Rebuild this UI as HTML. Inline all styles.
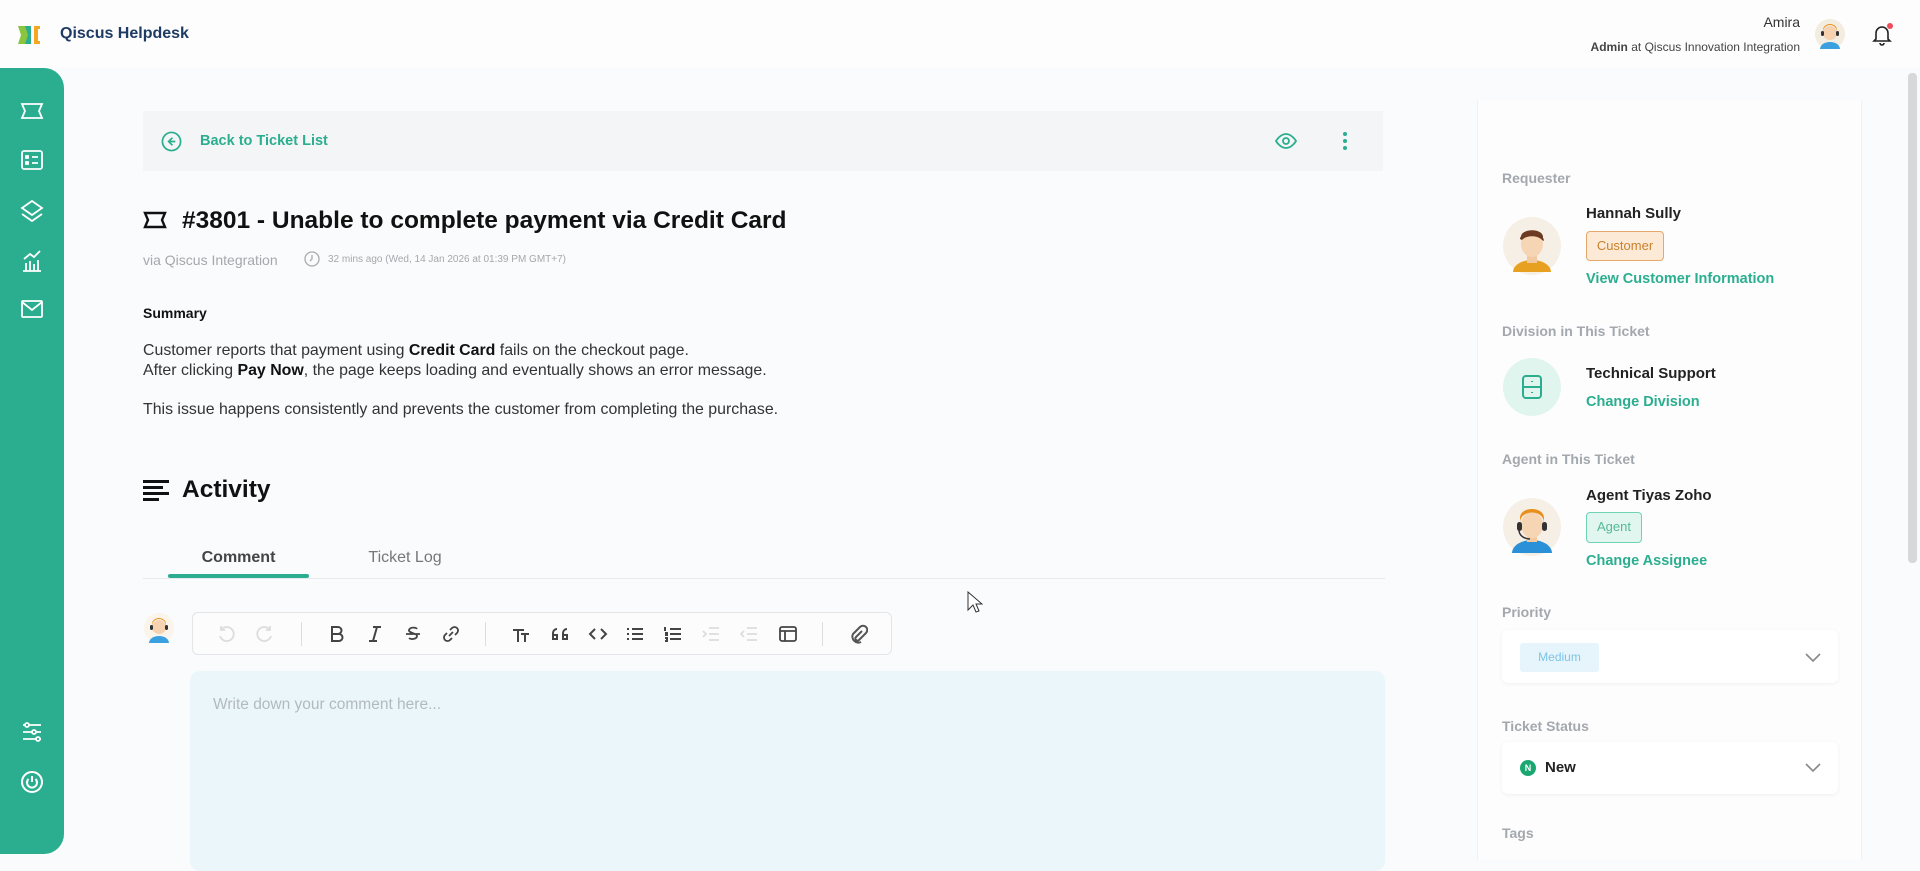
<!DOCTYPE html>
<html><head><meta charset="utf-8"><style>
*{margin:0;padding:0;box-sizing:border-box}
body{width:1920px;height:854px;overflow:hidden;background:#fafbfc;font-family:"Liberation Sans",sans-serif;color:#1f2328;position:relative}
.a{position:absolute}
.hdr{left:0;top:0;width:1920px;height:68px;background:#fdfdfd}
.side{left:0;top:68px;width:64px;height:786px;background:#2bae8f;border-radius:0 20px 20px 0}
.side svg{position:absolute;left:20px}
.lbl{font-size:14px;color:#a3a8ae;font-weight:bold;left:1502px}
.teal{color:#2bae8f}
.tb svg{position:absolute;top:11px}
</style></head><body>
<div class="a hdr"></div>
<svg class="a" style="left:18px;top:26px" width="28" height="18" viewBox="0 0 28 18"><path d="M0 0h8l3 9-3 9H0l3-9z" fill="#8bc53f"/><path d="M7 0h6v18H7l3-9z" fill="#2bae8f"/><path d="M16 0h6v3h-2v12h2v3h-6z" fill="#f5a623"/></svg>
<div class="a" style="left:60px;top:25px;font-size:16px;font-weight:bold;color:#1d3b63">Qiscus Helpdesk</div>
<div class="a" style="right:120px;top:14px;font-size:14px;color:#333">Amira</div>
<div class="a" style="right:120px;top:40px;font-size:12px;color:#444"><b>Admin</b> at Qiscus Innovation Integration</div>
<svg class="a" style="left:1815px;top:19px" width="30" height="32" viewBox="0 0 30 32"><circle cx="15" cy="15" r="15" fill="#f3ece0"/><path d="M5 30a10 7 0 0 1 20 0z" fill="#3aa0e0"/><circle cx="15" cy="14" r="7" fill="#f6d2b0"/><path d="M8 13a7 7 0 0 1 14 0v-2a7 6 0 0 0-14 0z" fill="#e8901e"/><rect x="6" y="12" width="3" height="5" rx="1.5" fill="#333"/><rect x="21" y="12" width="3" height="5" rx="1.5" fill="#333"/></svg>
<svg class="a" style="left:1870px;top:22px" width="24" height="24" viewBox="0 0 24 24" fill="none" stroke="#222" stroke-width="1.6"><path d="M6 17V11a6 6 0 0 1 12 0v6l2 2H4z"/><path d="M10 21a2 2 0 0 0 4 0"/><circle cx="20" cy="4" r="3" fill="#ef4b5b" stroke="none"/></svg>

<div class="a side">
<svg style="top:33px" width="24" height="20" viewBox="0 0 24 20" fill="none" stroke="#fff" stroke-width="1.8"><path d="M2 3h20l-3 7 3 7H2l3-7z"/></svg>
<svg style="top:81px" width="24" height="22" viewBox="0 0 24 22" fill="none" stroke="#fff" stroke-width="1.8"><rect x="2" y="2" width="20" height="18" rx="2"/><path d="M12 8h6M12 14h6"/><rect x="6" y="7" width="2" height="2" fill="#fff"/><rect x="6" y="13" width="2" height="2" fill="#fff"/></svg>
<svg style="top:131px" width="24" height="24" viewBox="0 0 24 24" fill="none" stroke="#fff" stroke-width="1.8"><path d="M12 2l10 7-10 7-10-7z"/><path d="M2 15l10 7 10-7"/></svg>
<svg style="top:181px" width="24" height="24" viewBox="0 0 24 24" fill="none" stroke="#fff" stroke-width="1.8"><path d="M3 22h18M6 22v-8M10 22v-10M14 22v-7M18 22v-11M4 10l6-5 4 3 6-6"/></svg>
<svg style="top:231px" width="24" height="20" viewBox="0 0 24 20" fill="none" stroke="#fff" stroke-width="1.8"><rect x="2" y="2" width="20" height="16" rx="1"/><path d="M2 3l10 8 10-8"/></svg>
<svg style="top:652px" width="24" height="24" viewBox="0 0 24 24" fill="none" stroke="#fff" stroke-width="1.8"><path d="M3 5h18M3 12h18M3 19h18"/><circle cx="7" cy="5" r="2" fill="#2bae8f"/><circle cx="14" cy="12" r="2" fill="#2bae8f"/><circle cx="18" cy="19" r="2" fill="#2bae8f"/></svg>
<svg style="top:702px" width="24" height="24" viewBox="0 0 24 24" fill="none" stroke="#fff" stroke-width="2"><circle cx="12" cy="12" r="10"/><path d="M8.5 9a5 5 0 1 0 7 0M12 6v6"/></svg>
</div>

<div class="a" style="left:143px;top:111px;width:1240px;height:60px;background:#f4f5f6"></div>
<svg class="a" style="left:161px;top:131px" width="21" height="21" viewBox="0 0 22 22" fill="none" stroke="#2bae8f" stroke-width="1.8"><circle cx="11" cy="11" r="9.5"/><path d="M12 7l-4 4 4 4M8 11h7"/></svg>
<div class="a teal" style="left:200px;top:133px;font-size:14.5px;font-weight:bold">Back to Ticket List</div>
<svg class="a" style="left:1275px;top:133px" width="22" height="16" viewBox="0 0 22 16" fill="none" stroke="#2bae8f" stroke-width="1.8"><path d="M1 8s4-7 10-7 10 7 10 7-4 7-10 7S1 8 1 8z"/><circle cx="11" cy="8" r="3"/></svg>
<svg class="a" style="left:1342px;top:131px" width="6" height="20"><circle cx="3" cy="3" r="2" fill="#2bae8f"/><circle cx="3" cy="10" r="2" fill="#2bae8f"/><circle cx="3" cy="17" r="2" fill="#2bae8f"/></svg>

<svg class="a" style="left:143px;top:210px" width="24" height="20" viewBox="0 0 24 20" fill="none" stroke="#111" stroke-width="2.4"><path d="M2 3h20l-3 7 3 7H2l3-7z"/></svg>
<div class="a" style="left:182px;top:207px;font-size:24.5px;font-weight:bold;color:#111">#3801 - Unable to complete payment via Credit Card</div>
<div class="a" style="left:143px;top:252px;font-size:14px;color:#a4a8ad">via Qiscus Integration</div>
<svg class="a" style="left:304px;top:251px" width="16" height="16" viewBox="0 0 16 16" fill="none" stroke="#aaa" stroke-width="1.3"><circle cx="8" cy="8" r="7"/><path d="M8 4v4l-2 2"/></svg>
<div class="a" style="left:328px;top:254px;font-size:10px;color:#a4a8ad">32 mins ago (Wed, 14 Jan 2026 at 01:39 PM GMT+7)</div>

<div class="a" style="left:143px;top:305px;font-size:14px;font-weight:bold;color:#111">Summary</div>
<div class="a" style="left:143px;top:341px;font-size:15.9px;line-height:20px;color:#333">Customer reports that payment using <b style="color:#111">Credit Card</b> fails on the checkout page.<br>After clicking <b style="color:#111">Pay Now</b>, the page keeps loading and eventually shows an error message.</div>
<div class="a" style="left:143px;top:401px;font-size:15.9px;color:#333">This issue happens consistently and prevents the customer from completing the purchase.</div>

<svg class="a" style="left:143px;top:479px" width="26" height="22" viewBox="0 0 26 22" fill="#111"><rect y="1" width="26" height="3"/><rect y="7" width="20" height="3"/><rect y="13" width="26" height="3"/><rect y="19" width="16" height="3"/></svg>
<div class="a" style="left:182px;top:476px;font-size:24.5px;font-weight:bold;color:#111">Activity</div>

<div class="a" style="left:143px;top:578px;width:1242px;height:1px;background:#e8eaec"></div>
<div class="a" style="left:168px;top:574px;width:141px;height:4px;background:#2bae8f;border-radius:2px"></div>
<div class="a" style="left:168px;top:549px;width:141px;text-align:center;font-size:16px;font-weight:bold;color:#444">Comment</div>
<div class="a" style="left:340px;top:549px;width:130px;text-align:center;font-size:16px;color:#777">Ticket Log</div>

<svg class="a" style="left:144px;top:613px" width="30" height="32" viewBox="0 0 30 32"><circle cx="15" cy="15" r="15" fill="#fbf4ea"/><path d="M5 30a10 7 0 0 1 20 0z" fill="#3aa0e0"/><circle cx="15" cy="14" r="7" fill="#f6d2b0"/><path d="M8 13a7 7 0 0 1 14 0v-2a7 6 0 0 0-14 0z" fill="#e8901e"/><rect x="6" y="12" width="3" height="5" rx="1.5" fill="#333"/><rect x="21" y="12" width="3" height="5" rx="1.5" fill="#333"/></svg>

<div class="a tb" style="left:192px;top:612px;width:700px;height:43px;border:1px solid #e3e5e8;border-radius:6px;background:#fcfcfd">
<svg style="left:23px" width="20" height="20" viewBox="0 0 20 20" fill="none" stroke="#ddd" stroke-width="1.8"><path d="M5 6a7 7 0 1 1-1 6M5 2v4h4"/></svg>
<svg style="left:62px" width="20" height="20" viewBox="0 0 20 20" fill="none" stroke="#ddd" stroke-width="1.8"><path d="M15 6a7 7 0 1 0 1 6M15 2v4h-4"/></svg>
<div class="a" style="left:108px;top:9px;width:1px;height:24px;background:#ddd"></div>
<svg style="left:134px" width="20" height="20" viewBox="0 0 20 20" fill="none" stroke="#444" stroke-width="2"><path d="M5 3h6a3.5 3.5 0 0 1 0 7H5zM5 10h7a3.5 3.5 0 0 1 0 7H5z"/></svg>
<svg style="left:172px" width="20" height="20" viewBox="0 0 20 20" fill="none" stroke="#444" stroke-width="2"><path d="M8 3h8M4 17h8M12 3l-4 14"/></svg>
<svg style="left:210px" width="20" height="20" viewBox="0 0 20 20" fill="none" stroke="#444" stroke-width="1.8"><path d="M3 10h14M14 5c-1-2-7-2-8 1s8 3 8 6-6 4-8 2"/></svg>
<svg style="left:248px" width="20" height="20" viewBox="0 0 20 20" fill="none" stroke="#444" stroke-width="1.8"><path d="M8 12l4-4M9 6l2-2a3 3 0 0 1 5 5l-2 2M11 14l-2 2a3 3 0 0 1-5-5l2-2"/></svg>
<div class="a" style="left:292px;top:9px;width:1px;height:24px;background:#ddd"></div>
<svg style="left:318px" width="20" height="20" viewBox="0 0 20 20" fill="none" stroke="#444" stroke-width="2"><path d="M2 6h11M7 6v12M10 10h8M14 10v8"/></svg>
<svg style="left:356px" width="22" height="20" viewBox="0 0 22 20" fill="none" stroke="#444" stroke-width="2"><path d="M8 5a4 4 0 0 0-4 4v6h4v-4H5M18 5a4 4 0 0 0-4 4v6h4v-4h-3"/></svg>
<svg style="left:395px" width="20" height="20" viewBox="0 0 20 20" fill="none" stroke="#444" stroke-width="2"><path d="M7 5l-5 5 5 5M13 5l5 5-5 5"/></svg>
<svg style="left:432px" width="20" height="20" viewBox="0 0 20 20" fill="none" stroke="#444" stroke-width="2"><path d="M7 5h11M7 10h11M7 15h11M2 5h2M2 10h2M2 15h2"/></svg>
<svg style="left:470px" width="20" height="20" viewBox="0 0 20 20" fill="none" stroke="#444" stroke-width="2"><path d="M7 5h11M7 10h11M7 15h11M2 3v4M2 9h2v2H2M2 14h2v3H2"/></svg>
<svg style="left:508px" width="20" height="20" viewBox="0 0 20 20" fill="none" stroke="#ddd" stroke-width="1.8"><path d="M8 4h10M8 10h10M8 16h10M2 7l3 3-3 3"/></svg>
<svg style="left:546px" width="20" height="20" viewBox="0 0 20 20" fill="none" stroke="#ddd" stroke-width="1.8"><path d="M8 4h10M8 10h10M8 16h10M5 7l-3 3 3 3"/></svg>
<svg style="left:585px" width="20" height="20" viewBox="0 0 20 20" fill="none" stroke="#444" stroke-width="1.8"><rect x="2" y="3" width="16" height="14" rx="2"/><path d="M2 7h16M7 7v10"/></svg>
<div class="a" style="left:629px;top:9px;width:1px;height:24px;background:#ddd"></div>
<svg style="left:655px" width="20" height="20" viewBox="0 0 20 20" fill="none" stroke="#555" stroke-width="2"><path d="M14 7l-6 6a2 2 0 0 0 3 3l7-7a4 4 0 0 0-6-6L5 10a6 6 0 0 0 8 8"/></svg>
</div>

<div class="a" style="left:190px;top:671px;width:1195px;height:200px;background:#eaf6fa;border-radius:10px"></div>
<div class="a" style="left:213px;top:696px;font-size:15.5px;color:#b3b9c0">Write down your comment here...</div>

<svg class="a" style="left:967px;top:591px" width="16" height="24" viewBox="0 0 16 24"><path d="M1 1v18l5-5 3 7 3-1-3-7h6z" fill="#fff" stroke="#333" stroke-width="1"/></svg>

<div class="a" style="left:1477px;top:100px;width:385px;height:760px;background:#fdfdfd;border-left:1px solid #f0f1f2;border-right:1px solid #f0f1f2"></div>
<div class="a" style="left:1908px;top:73px;width:9px;height:490px;background:#d6d8da;border-radius:4px"></div>

<div class="a lbl" style="top:170px">Requester</div>
<svg class="a" style="left:1503px;top:217px" width="58" height="58" viewBox="0 0 58 58"><circle cx="29" cy="29" r="29" fill="#f6efe6"/><path d="M10 55a19 12 0 0 1 38 0z" fill="#e8a020"/><rect x="24" y="36" width="10" height="10" fill="#f2c9a0"/><ellipse cx="29" cy="27" rx="11" ry="13" fill="#f6d5b5"/><path d="M18 24c0-10 22-10 22 0v-4c0-9-22-9-22 0z" fill="#6b3a20"/><path d="M17 22c0-8 24-8 24 2l-2-1c-4-5-16-5-20 0z" fill="#6b3a20"/></svg>
<div class="a" style="left:1586px;top:205px;font-size:15px;font-weight:bold;color:#222">Hannah Sully</div>
<div class="a" style="left:1586px;top:231px;width:78px;height:30px;border:1.5px solid #e6a76a;background:#fdead6;border-radius:4px;color:#c9812e;font-size:13px;text-align:center;line-height:27px">Customer</div>
<div class="a teal" style="left:1586px;top:271px;font-size:14.5px;font-weight:bold">View Customer Information</div>

<div class="a lbl" style="top:323px">Division in This Ticket</div>
<div class="a" style="left:1503px;top:358px;width:58px;height:58px;border-radius:50%;background:#e1f5ef"></div>
<svg class="a" style="left:1521px;top:375px" width="22" height="24" viewBox="0 0 22 24" fill="none" stroke="#2bae8f" stroke-width="2"><rect x="2" y="1" width="18" height="22" rx="3"/><path d="M2 12h18M11 6v1M11 17v1"/></svg>
<div class="a" style="left:1586px;top:365px;font-size:15px;font-weight:bold;color:#222">Technical Support</div>
<div class="a teal" style="left:1586px;top:394px;font-size:14.5px;font-weight:bold">Change Division</div>

<div class="a lbl" style="top:451px">Agent in This Ticket</div>
<svg class="a" style="left:1503px;top:498px" width="58" height="58" viewBox="0 0 58 58"><circle cx="29" cy="29" r="29" fill="#f6efe6"/><path d="M9 55a20 13 0 0 1 40 0z" fill="#2a90d8"/><rect x="24" y="36" width="10" height="8" fill="#f2c9a0"/><ellipse cx="29" cy="27" rx="11" ry="13" fill="#f6d5b5"/><path d="M17 25c0-14 24-14 24 0v-5c0-12-24-12-24 0z" fill="#e8901e"/><rect x="14" y="24" width="5" height="9" rx="2.5" fill="#333"/><rect x="39" y="24" width="5" height="9" rx="2.5" fill="#333"/><path d="M16 32c0 6 6 9 11 9" stroke="#333" stroke-width="1.5" fill="none"/></svg>
<div class="a" style="left:1586px;top:487px;font-size:15px;font-weight:bold;color:#222">Agent Tiyas Zoho</div>
<div class="a" style="left:1586px;top:512px;width:56px;height:31px;border:1.5px solid #6fd3b6;background:#e0f6ee;border-radius:4px;color:#56b89a;font-size:13px;text-align:center;line-height:28px">Agent</div>
<div class="a teal" style="left:1586px;top:553px;font-size:14.5px;font-weight:bold">Change Assignee</div>

<div class="a lbl" style="top:604px">Priority</div>
<div class="a" style="left:1502px;top:630px;width:336px;height:53px;background:#fff;border-radius:6px;box-shadow:0 1px 4px rgba(0,0,0,.06)"></div>
<div class="a" style="left:1520px;top:643px;width:79px;height:29px;background:#e6f4fb;border-radius:3px;color:#7cc5e6;font-size:12px;text-align:center;line-height:29px">Medium</div>
<svg class="a" style="left:1804px;top:651px" width="18" height="12" viewBox="0 0 18 12" fill="none" stroke="#888" stroke-width="1.6"><path d="M2 3l7 7 7-7"/></svg>

<div class="a lbl" style="top:718px">Ticket Status</div>
<div class="a" style="left:1502px;top:742px;width:336px;height:52px;background:#fff;border-radius:6px;box-shadow:0 1px 4px rgba(0,0,0,.06)"></div>
<div class="a" style="left:1520px;top:760px;width:16px;height:16px;border-radius:50%;background:#1ba870;color:#fff;font-size:9px;font-weight:bold;text-align:center;line-height:16px">N</div>
<div class="a" style="left:1545px;top:759px;font-size:15px;font-weight:bold;color:#222">New</div>
<svg class="a" style="left:1804px;top:761px" width="18" height="12" viewBox="0 0 18 12" fill="none" stroke="#888" stroke-width="1.6"><path d="M2 3l7 7 7-7"/></svg>

<div class="a lbl" style="top:825px">Tags</div>
</body></html>
